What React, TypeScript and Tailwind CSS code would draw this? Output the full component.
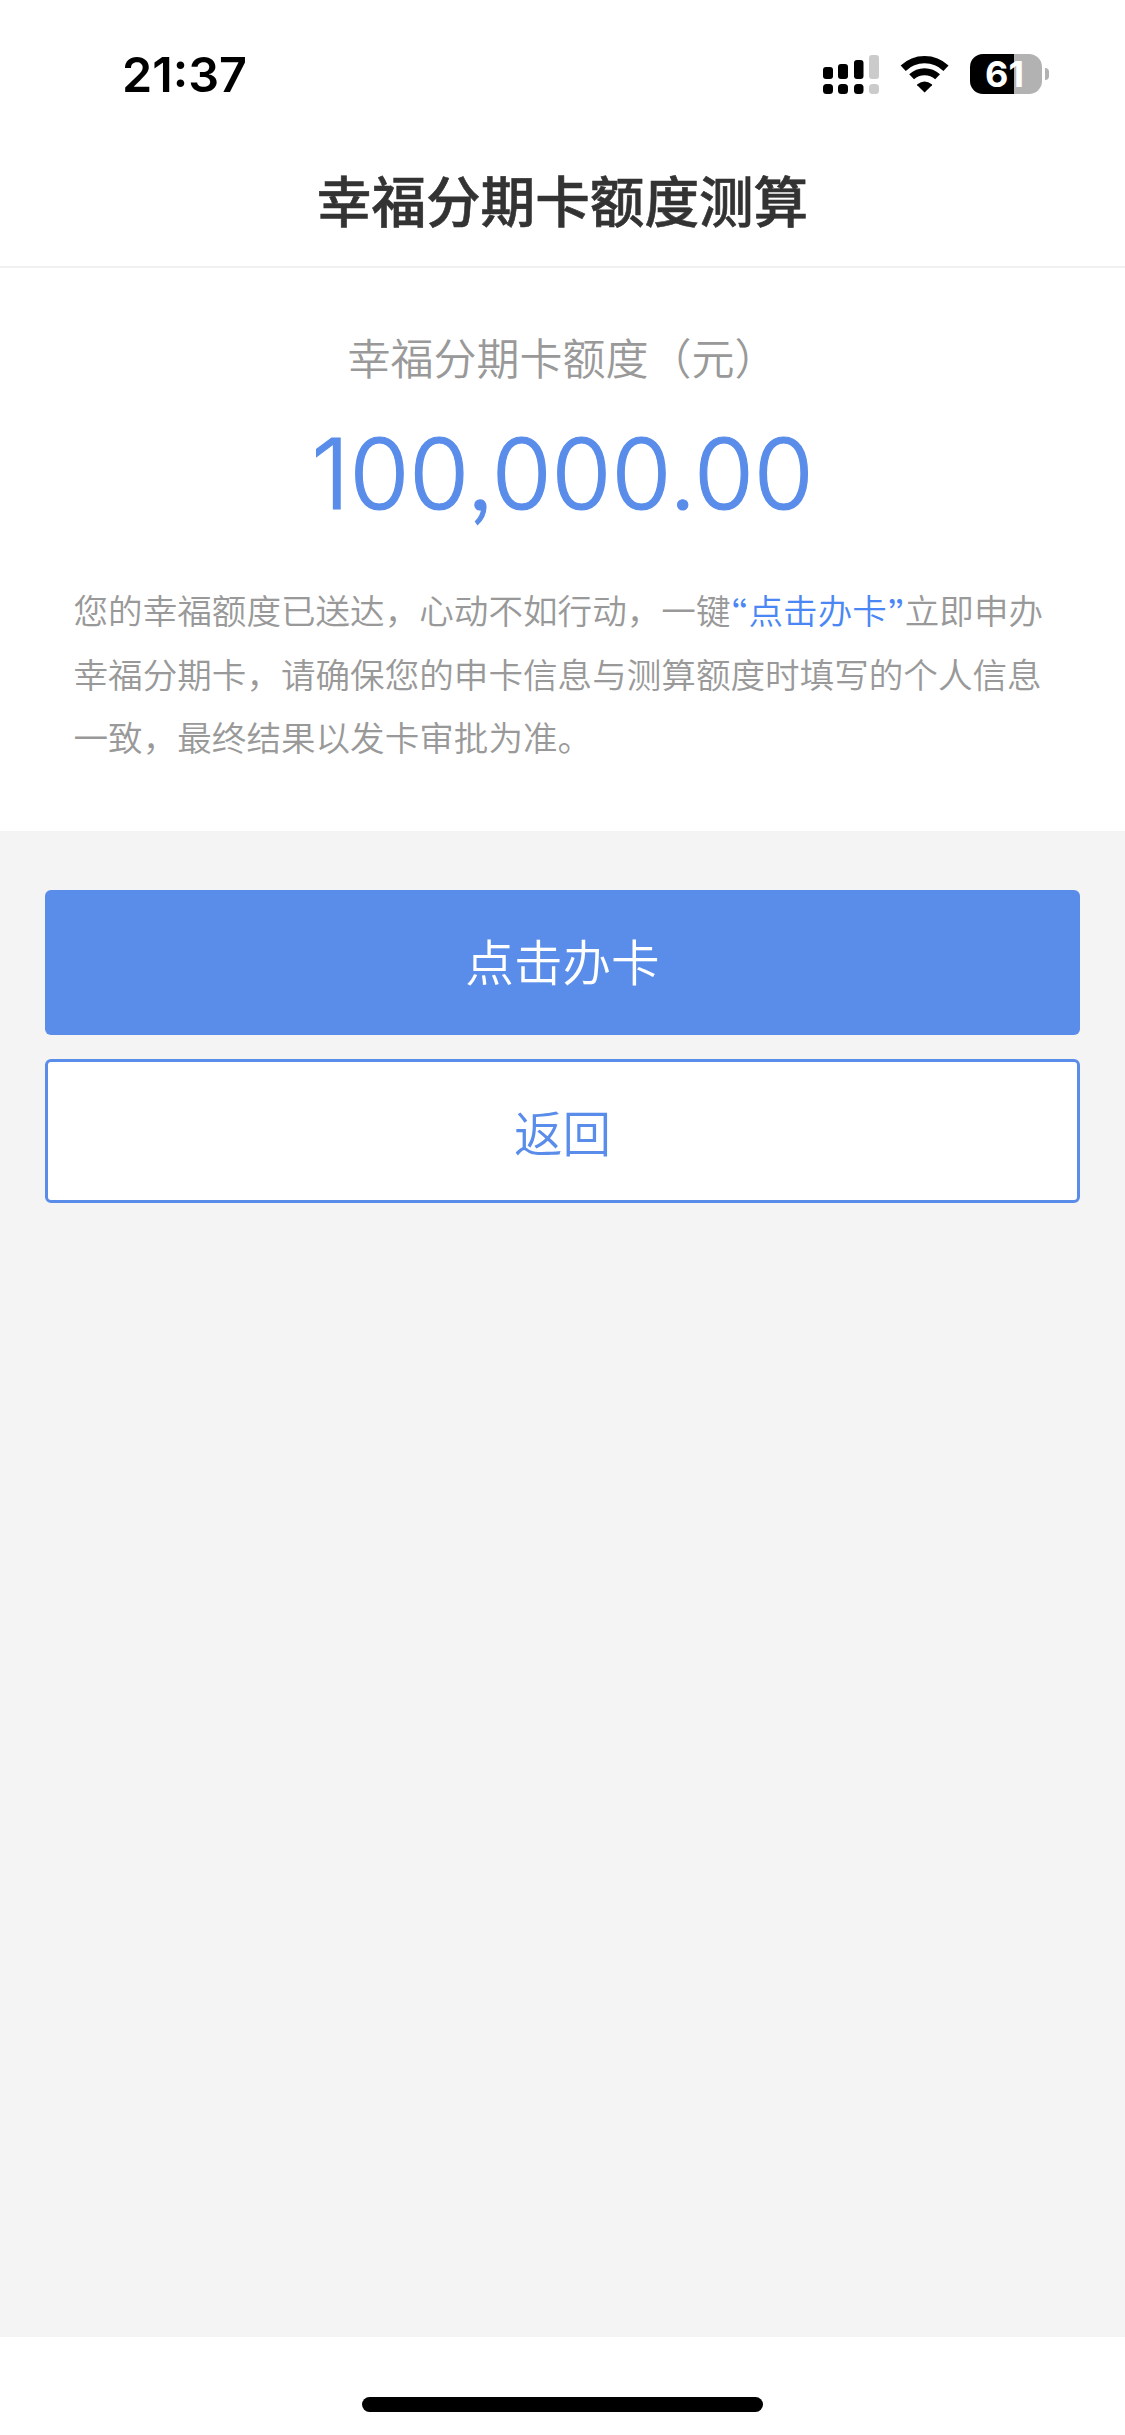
import { ReactNode } from "react";

const SignalIcon = () => (
  <svg width="58" height="42" viewBox="0 0 58 42" fill="black">
    <rect x="1" y="13" width="10" height="12" rx="3" />
    <rect x="16" y="10" width="10" height="15" rx="3" />
    <rect x="32" y="6" width="9.5" height="19" rx="3" />
    <rect x="47" y="1" width="10" height="24" rx="3" fill="#cbcbcb" />
    <rect x="1" y="30" width="10" height="10" rx="3.5" />
    <rect x="16" y="30" width="10" height="10" rx="3.5" />
    <rect x="32" y="30" width="9.5" height="10" rx="3.5" />
    <rect x="47" y="30" width="10" height="10" rx="3.5" fill="#cbcbcb" />
  </svg>
);

const WifiIcon = () => (
  <svg width="50" height="42" viewBox="0 0 50 42" fill="none" stroke="black">
    <path d="M3.2 14.2 A31 31 0 0 1 46 14.2" strokeWidth="7.4" />
    <path d="M11.6 22.8 A19 19 0 0 1 37.6 22.8" strokeWidth="7" />
    <path
      d="M24.6 38.6 L17.2 31.2 Q16.8 30.7 17.4 30.2 Q24.6 24.8 31.8 30.2 Q32.4 30.7 32 31.2 Z"
      fill="black"
      stroke="none"
    />
  </svg>
);

const StatusBar = () => (
  <div className="flex h-[150px] items-start justify-between pl-[122px] pr-[76px] font-['Inter',sans-serif]">
    <span className="mt-[45px] text-[48.5px] leading-[60px] font-semibold text-black">
      21:37
    </span>
    <div className="mt-[54px] flex items-start">
      <SignalIcon />
      <div className="ml-[20px]">
        <WifiIcon />
      </div>
      <div className="ml-[20px] flex items-center">
        <div className="flex h-[40px] w-[72px] items-center justify-center rounded-[13px] bg-[linear-gradient(to_right,black_44.5px,#b2b2b2_44.5px)] pr-[3px] text-[36px] leading-none font-bold text-white">
          61
        </div>
        <div className="ml-[3px] h-[12px] w-[4px] rounded-r-full bg-[#b2b2b2]" />
      </div>
    </div>
  </div>
);

const Quote = ({ children }: { children: ReactNode }) => (
  <span className="inline-block w-[18px] text-center font-['Inter',sans-serif] leading-none font-normal [font-feature-settings:'ss03']">
    {children}
  </span>
);

const App = () => {
  return (
    <div className="flex h-[2435px] w-[1125px] flex-col bg-white font-['Noto_Sans_CJK_SC',sans-serif]">
      <StatusBar />
      <header className="flex h-[118px] items-center justify-center border-b-2 border-[#f0f0f0] pb-[19px]">
        <h1 className="text-[54.6px] leading-[80px] font-medium text-[#333333] [-webkit-text-stroke:0.6px]">
          幸福分期卡额度测算
        </h1>
      </header>

      <section className="flex h-[563px] flex-col items-center pt-[58px]">
        <p className="text-[43px] leading-[60px] font-[350] text-[#999999]">
          幸福分期卡额度（元）
        </p>
        <p className="mt-[33px] font-['Inter',sans-serif] text-[97px] leading-[110px] font-light text-[#5a8dea] [-webkit-text-stroke:1.2px] [font-feature-settings:'ss03']">
          100,000.00
        </p>
        <p className="mt-[49px] w-[978px] text-[34.6px] leading-[63.5px] font-[350] text-[#999999]">
          您的幸福额度已送达，心动不如行动，一键
          <span className="text-[#4a87f5]">
            <Quote>“</Quote>点击办卡<Quote>”</Quote>
          </span>
          立即申办
          <br />
          幸福分期卡，请确保您的申卡信息与测算额度时填写的个人信息
          <br />
          一致，最终结果以发卡审批为准。
        </p>
      </section>

      <main className="flex flex-1 flex-col gap-6 bg-[#f4f4f4] px-[45px] pt-[59px]">
        <button className="h-[145px] rounded-[6px] bg-[#5a8dea] pb-[4px] text-[48.6px] font-[350] text-white">
          点击办卡
        </button>
        <button className="h-[144px] rounded-[6px] border-3 border-[#5a8dea] bg-white text-[48.6px] font-[350] text-[#5a8dea]">
          返回
        </button>
      </main>

      <footer className="flex h-[98px] justify-center bg-white pt-[60px]">
        <div className="h-[15px] w-[401px] rounded-full bg-black" />
      </footer>
    </div>
  );
};

export default App;
